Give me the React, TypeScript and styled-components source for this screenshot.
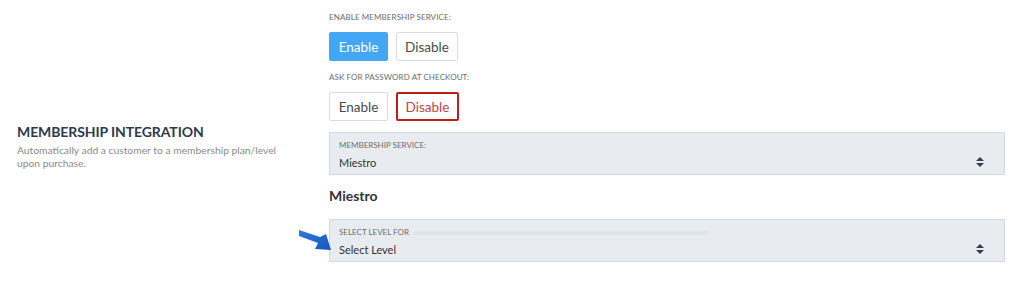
import React, { FC } from 'react'
import styled, { createGlobalStyle } from 'styled-components'

const GlobalStyle = createGlobalStyle`
  html, body {
    margin: 0;
    padding: 0;
    background: #ffffff;
    font-family: Lato, "Open Sans", Arial, sans-serif;
  }
`

const Page = styled.div`
  display: grid;
  grid-template-columns: 329px 675px;
  width: 1024px;
  height: 283px;
  box-sizing: border-box;
`

const Intro = styled.div`
  padding: 123px 0 0 17px;
`

const Title = styled.h2`
  margin: 0 0 4px;
  font-size: 14px;
  font-weight: 700;
  color: #2d3a4e;
  letter-spacing: -0.1px;
`

const Description = styled.p`
  margin: 0;
  width: 280px;
  font-size: 10.3px;
  line-height: 13px;
  color: #8a8a8a;
`

const Settings = styled.div`
  display: flex;
  flex-direction: column;
  padding-top: 12px;
`

const FieldLabel = styled.div`
  font-size: 8px;
  text-transform: uppercase;
  color: #6b6b6b;
  letter-spacing: 0.1px;
  margin-bottom: 10px;
`

const ButtonRow = styled.div`
  display: flex;
  gap: 8px;
  margin-bottom: 11px;
`

type Variant = 'primary' | 'plain' | 'danger'

const ToggleButton = styled.button<{ $variant: Variant; $width: number }>`
  height: 29px;
  padding: 0;
  width: ${p => p.$width}px;
  box-sizing: border-box;
  font-family: inherit;
  font-size: 13.5px;
  border-radius: 2px;
  cursor: pointer;
  background: ${p => (p.$variant === 'primary' ? '#43a7f5' : '#ffffff')};
  color: ${p => (p.$variant === 'primary' ? '#ffffff' : p.$variant === 'danger' ? '#c0453f' : '#4a4a4a')};
  border: ${p =>
    p.$variant === 'primary'
      ? '1px solid #43a7f5'
      : p.$variant === 'danger'
        ? '2px solid #bf1e1e'
        : '1px solid #dcdcdc'};
`

const SelectBox = styled.div`
  position: relative;
  width: 676px;
  height: 43px;
  box-sizing: border-box;
  background: #e8ecf1;
  border: 1px solid #d3d9e0;
  padding: 7px 9px 0;
`

const SelectLabel = styled.div`
  font-size: 8px;
  text-transform: uppercase;
  color: #6e6e6e;
  margin-bottom: 6px;
`

const SelectValue = styled.div`
  font-size: 11px;
  color: #333333;
`

const Chevrons = styled.svg`
  position: absolute;
  right: 20px;
  top: 24px;
`

const Blur = styled.span`
  display: inline-block;
  vertical-align: middle;
  width: 295px;
  height: 4px;
  margin-left: 2px;
  background: #e0e5eb;
  border-radius: 2px;
`

const SectionHeading = styled.h3`
  margin: 12px 0 15px;
  font-size: 14px;
  font-weight: 700;
  color: #333333;
`

const Pointer = styled.svg`
  position: absolute;
  left: -33px;
  top: 8px;
`

const SelectField: FC<{ label: React.ReactNode; value: string; pointer?: boolean }> = ({ label, value, pointer }) => (
  <SelectBox>
    {pointer && (
      <Pointer width="36" height="24" viewBox="0 0 36 24">
        <defs>
          <linearGradient id="arrowFill" x1="0" y1="0" x2="1" y2="1">
            <stop offset="0" stopColor="#2f79e0" />
            <stop offset="1" stopColor="#1556bd" />
          </linearGradient>
        </defs>
        <path d="M2 2 L23 9 L29 6 L34 22 L18 21 L21 15 L2 8 Z" fill="url(#arrowFill)" />
      </Pointer>
    )}
    <SelectLabel>{label}</SelectLabel>
    <SelectValue>{value}</SelectValue>
    <Chevrons width="8" height="10" viewBox="0 0 8 10">
      <path d="M0 4 L4 0 L8 4 Z M0 6 L4 10 L8 6 Z" fill="#2f3e50" />
    </Chevrons>
  </SelectBox>
)

const App: FC = () => {
  return (
    <>
      <GlobalStyle />
      <Page>
        <Intro>
          <Title>MEMBERSHIP INTEGRATION</Title>
          <Description>Automatically add a customer to a membership plan/level upon purchase.</Description>
        </Intro>
        <Settings>
          <FieldLabel>Enable membership service:</FieldLabel>
          <ButtonRow>
            <ToggleButton $variant="primary" $width={59}>Enable</ToggleButton>
            <ToggleButton $variant="plain" $width={62}>Disable</ToggleButton>
          </ButtonRow>
          <FieldLabel>Ask for password at checkout:</FieldLabel>
          <ButtonRow>
            <ToggleButton $variant="plain" $width={59}>Enable</ToggleButton>
            <ToggleButton $variant="danger" $width={63}>Disable</ToggleButton>
          </ButtonRow>
          <SelectField label="Membership service:" value="Miestro" />
          <SectionHeading>Miestro</SectionHeading>
          <SelectField label={<>Select level for <Blur /></>} value="Select Level" pointer />
        </Settings>
      </Page>
    </>
  )
}

export default App
